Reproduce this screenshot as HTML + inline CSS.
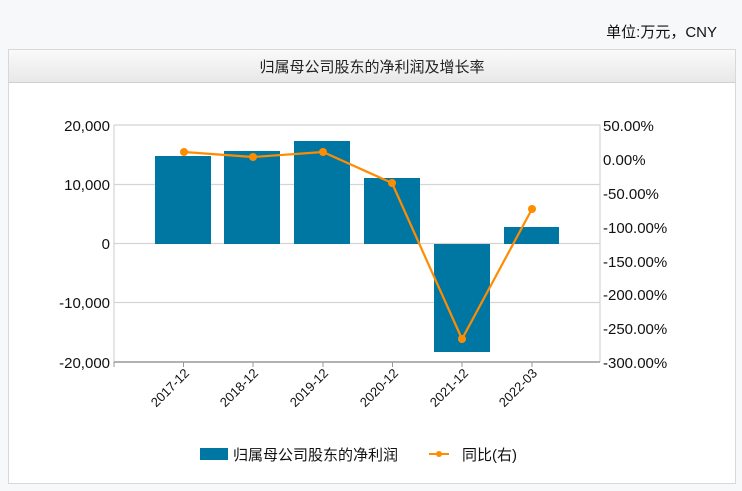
<!DOCTYPE html>
<html><head><meta charset="utf-8"><style>
html,body{margin:0;padding:0;background:#f7f8fa;}
body{width:742px;height:491px;position:relative;overflow:hidden;font-family:"Liberation Sans","Noto Sans CJK SC",sans-serif;}
</style></head><body>
<svg width="742" height="491" xmlns="http://www.w3.org/2000/svg" style="position:absolute;left:0;top:0" font-family="Liberation Sans, Noto Sans CJK SC, sans-serif">
<defs><linearGradient id="hg" x1="0" y1="0" x2="0" y2="1"><stop offset="0" stop-color="#fafafa"/><stop offset="1" stop-color="#e8e8e8"/></linearGradient></defs>
<text x="717" y="37" font-size="15" fill="#111" text-anchor="end">单位:万元，CNY</text>
<rect x="8.5" y="49.5" width="727" height="434" fill="#fff" stroke="#d8d8d8"/>
<rect x="9" y="50" width="726" height="32" fill="url(#hg)"/>
<line x1="9" y1="82.5" x2="735" y2="82.5" stroke="#d0d0d0"/>
<text x="372" y="72" font-size="15" fill="#222" text-anchor="middle">归属母公司股东的净利润及增长率</text>
<g stroke="#d4d4d4" stroke-width="1.2">
<line x1="114" y1="125" x2="600" y2="125"/><line x1="114" y1="184.5" x2="600" y2="184.5"/><line x1="114" y1="243.5" x2="600" y2="243.5"/><line x1="114" y1="302.5" x2="600" y2="302.5"/>
<line x1="114" y1="125" x2="114" y2="362"/><line x1="600" y1="125" x2="600" y2="362"/>
</g>
<line x1="114" y1="362" x2="600" y2="362" stroke="#999" stroke-width="1.5"/>
<g stroke="#999"><line x1="183.5" y1="362" x2="183.5" y2="367"/><line x1="253" y1="362" x2="253" y2="367"/><line x1="323" y1="362" x2="323" y2="367"/><line x1="392.5" y1="362" x2="392.5" y2="367"/><line x1="462" y1="362" x2="462" y2="367"/><line x1="532" y1="362" x2="532" y2="367"/><line x1="114" y1="362" x2="114" y2="367"/></g>
<g fill="#0077a2">
<rect x="155" y="156" width="56" height="88"/><rect x="224" y="151" width="56" height="93"/><rect x="294" y="141" width="56" height="103"/><rect x="364" y="178" width="56" height="66"/><rect x="434" y="244" width="56" height="108"/><rect x="504" y="227" width="55" height="17"/>
</g>
<polyline points="184,152 253,157 323,152 392,183 462,339 532,209" fill="none" stroke="#ff8c00" stroke-width="2.2"/>
<g fill="#ff8c00"><circle cx="184" cy="152" r="4"/><circle cx="253" cy="157" r="4"/><circle cx="323" cy="152" r="4"/><circle cx="392" cy="183" r="4"/><circle cx="462" cy="339" r="4"/><circle cx="532" cy="209" r="4"/></g>
<g font-size="15" fill="#111" text-anchor="end">
<text x="110" y="131">20,000</text><text x="110" y="190">10,000</text><text x="110" y="249">0</text><text x="110" y="308">-10,000</text><text x="110" y="368">-20,000</text>
</g>
<g font-size="15" fill="#111">
<text x="603" y="131">50.00%</text><text x="603" y="165">0.00%</text><text x="603" y="199">-50.00%</text><text x="603" y="233">-100.00%</text><text x="603" y="267">-150.00%</text><text x="603" y="300">-200.00%</text><text x="603" y="334">-250.00%</text><text x="603" y="368">-300.00%</text>
</g>
<g font-size="13" fill="#111" text-anchor="end">
<text transform="translate(190,374) rotate(-45)">2017-12</text>
<text transform="translate(259,374) rotate(-45)">2018-12</text>
<text transform="translate(329,374) rotate(-45)">2019-12</text>
<text transform="translate(399,374) rotate(-45)">2020-12</text>
<text transform="translate(469,374) rotate(-45)">2021-12</text>
<text transform="translate(538,374) rotate(-45)">2022-03</text>
</g>
<rect x="200" y="448" width="28" height="12" fill="#0077a2"/>
<text x="233" y="460" font-size="15" fill="#111">归属母公司股东的净利润</text>
<line x1="429" y1="454" x2="449" y2="454" stroke="#ff8c00" stroke-width="2"/>
<circle cx="439" cy="454" r="3" fill="#ff8c00"/>
<text x="462" y="460" font-size="15" fill="#111">同比(右)</text>
</svg>
</body></html>
